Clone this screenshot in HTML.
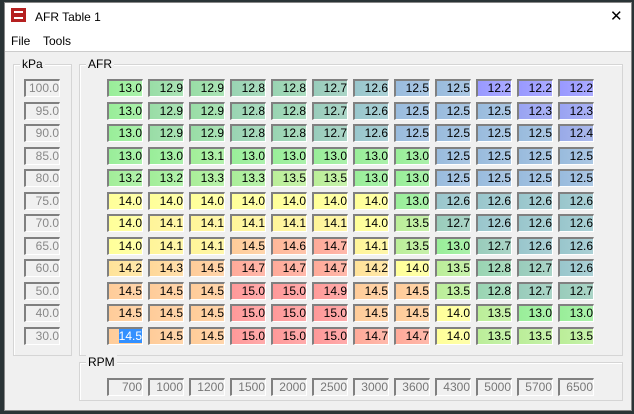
<!DOCTYPE html><html><head><style>
body{margin:0;width:634px;height:414px;background:#2a3436;position:relative;overflow:hidden;font-family:"Liberation Sans",sans-serif;font-size:12px}
#win{position:absolute;left:4px;top:2px;width:626px;height:407px;background:#f0f0f0;border:1px solid #888}
#title{position:absolute;left:0;top:0;width:626px;height:28px;background:#fff;font-size:12px}
#menu{position:absolute;left:0;top:28px;width:626px;height:20px;background:#fff;border-bottom:1px solid #ccc}
.gb{position:absolute;border:1px solid #d5d5d5;box-shadow:inset 1px 1px 0 #fff}
.gl{position:absolute;top:-8px;left:6px;background:#f0f0f0;padding:0 2px;font-size:12px;color:#000}
.c{position:absolute;width:33px;height:15px;border-top:2px solid #808080;border-left:2px solid #808080;border-right:1px solid #fff;border-bottom:1px solid #fff;text-align:right;line-height:15px;font-size:12px;color:#000;box-sizing:content-box;background-image:linear-gradient(90deg,rgba(255,255,255,0),rgba(255,255,255,0.18))}
.g{color:#888;background:#f0f0f0;background-image:none}
</style></head><body>
<div id="win">
<div id="title"><div style="position:absolute;left:6px;top:5px;width:15px;height:14px;background:#b52020"><div style="position:absolute;left:3px;top:3px;width:9px;height:8px;border-top:2px solid #fff;border-bottom:2px solid #fff;box-sizing:border-box"></div></div><span style="position:absolute;left:30px;top:7px">AFR Table 1</span><span style="position:absolute;left:605px;top:4px;font-size:15px">✕</span></div>
<div id="menu"><span style="position:absolute;left:6px;top:3px">File</span><span style="position:absolute;left:38px;top:3px">Tools</span></div>
</div>
<div class="gb" style="left:13px;top:64px;width:57px;height:290px"><span class="gl">kPa</span></div>
<div class="gb" style="left:79px;top:64px;width:542px;height:290px"><span class="gl">AFR</span></div>
<div class="gb" style="left:79px;top:362px;width:542px;height:37px"><span class="gl">RPM</span></div>
<div id="cells"></div>
<script>
var d=[
"13.0 12.9 12.9 12.8 12.8 12.7 12.6 12.5 12.5 12.2 12.2 12.2",
"13.0 12.9 12.9 12.8 12.8 12.7 12.6 12.5 12.5 12.5 12.3 12.3",
"13.0 12.9 12.9 12.8 12.8 12.7 12.6 12.5 12.5 12.5 12.5 12.4",
"13.0 13.0 13.1 13.0 13.0 13.0 13.0 13.0 12.5 12.5 12.5 12.5",
"13.2 13.2 13.3 13.3 13.5 13.5 13.0 13.0 12.5 12.5 12.5 12.5",
"14.0 14.0 14.0 14.0 14.0 14.0 14.0 13.0 12.6 12.6 12.6 12.6",
"14.0 14.1 14.1 14.1 14.1 14.1 14.0 13.5 12.7 12.6 12.6 12.6",
"14.0 14.1 14.1 14.5 14.6 14.7 14.1 13.5 13.0 12.7 12.6 12.6",
"14.2 14.3 14.5 14.7 14.7 14.7 14.2 14.0 13.5 12.8 12.7 12.6",
"14.5 14.5 14.5 15.0 15.0 14.9 14.5 14.5 13.5 12.8 12.7 12.7",
"14.5 14.5 14.5 15.0 15.0 15.0 14.5 14.5 14.0 13.5 13.0 13.0",
"14.5 14.5 14.5 15.0 15.0 15.0 14.7 14.7 14.0 13.5 13.5 13.5"];
var col={"12.2":"#9999ff","12.3":"#99a3f2","12.4":"#99aae8","12.5":"#99bbdd","12.6":"#99c6cc","12.7":"#99ccbb","12.8":"#99d4b2","12.9":"#99dda6","13.0":"#99ee99","13.1":"#a2ee99","13.2":"#a2ee99","13.3":"#aaee99","13.5":"#bbee99","14.0":"#ffff99","14.1":"#fff599","14.2":"#ffe399","14.3":"#ffd899","14.5":"#ffcc99","14.6":"#ffb899","14.7":"#ffaa99","14.9":"#ff9b99","15.0":"#ff9999"};
var kpa=["100.0","95.0","90.0","85.0","80.0","75.0","70.0","65.0","60.0","50.0","40.0","30.0"];
var rpm=["700","1000","1200","1500","2000","2500","3000","3600","4300","5000","5700","6500"];
var h="";
for(var r=0;r<12;r++){var y=Math.round(79+r*22.5);var v=d[r].split(" ");
h+='<div class="c g" style="left:24px;top:'+y+'px">'+kpa[r]+'</div>';
for(var c=0;c<12;c++){var x=107+c*41;var t=v[c];
if(r==11&&c==0)t='<span style="background:#3390ff;color:#fff">14.5</span>';
h+='<div class="c" style="left:'+x+'px;top:'+y+'px;background-color:'+col[v[c]]+'">'+t+'</div>';}}
for(var c=0;c<12;c++)h+='<div class="c g" style="left:'+(107+c*41)+'px;top:378px;color:#777">'+rpm[c]+'</div>';
document.getElementById("cells").innerHTML=h;
</script>
</body></html>
